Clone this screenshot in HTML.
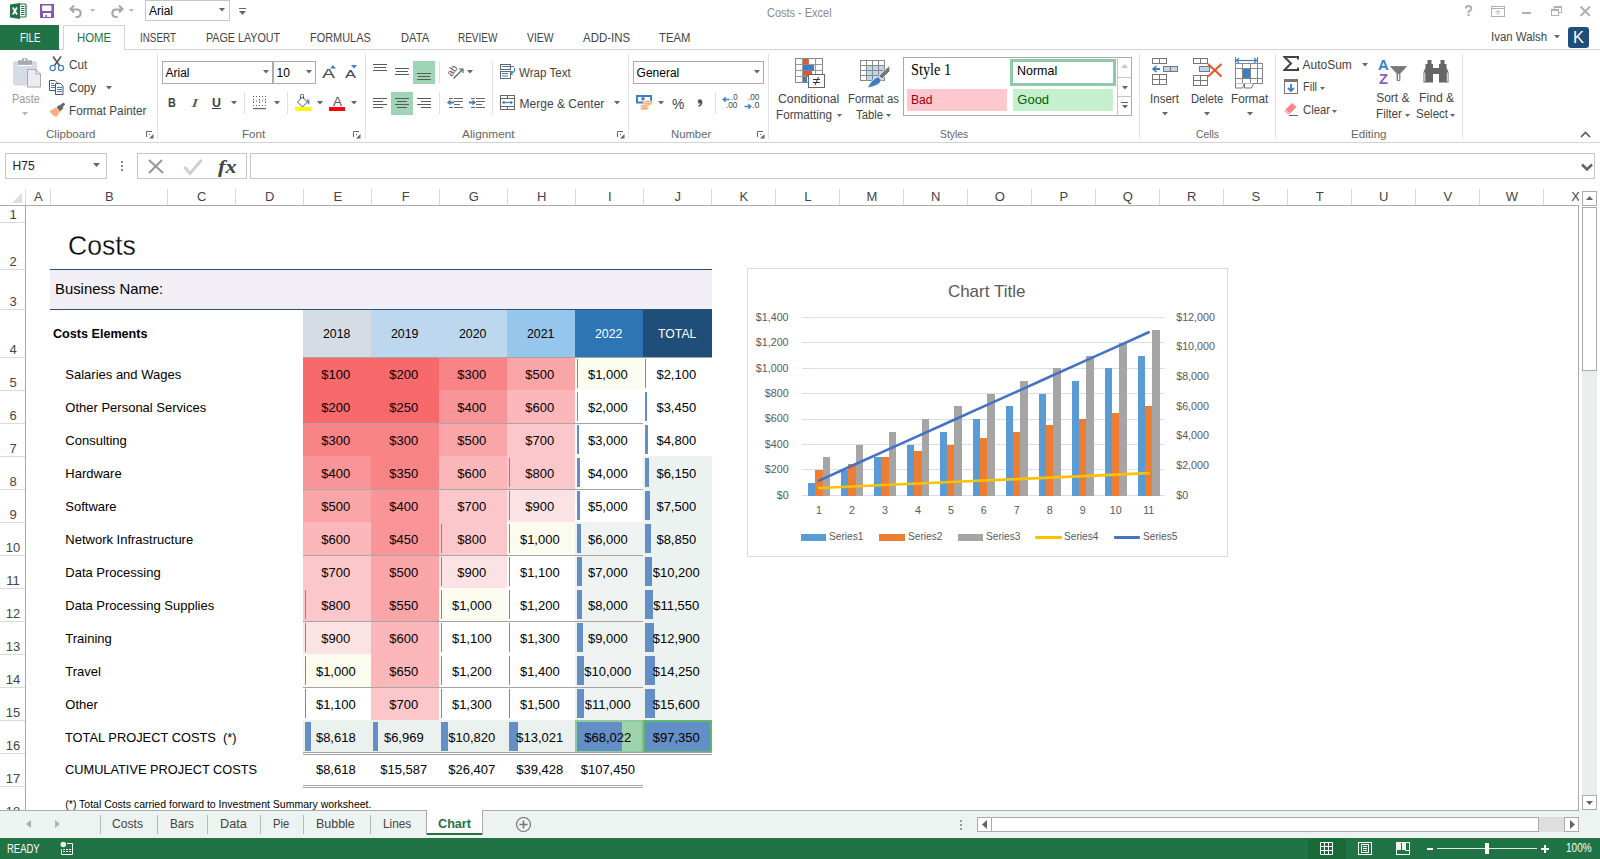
<!DOCTYPE html><html><head><meta charset="utf-8"><title>Costs - Excel</title><style>*{margin:0;padding:0;box-sizing:border-box}
html,body{width:1600px;height:859px;overflow:hidden;background:#fff;position:relative}
body>div,body>svg{position:absolute}
.t{white-space:pre;font-family:"Liberation Sans",sans-serif}
</style></head><body>
<svg style="left:10px;top:3px;" width="17" height="17" viewBox="0 0 17 17"><rect x="9.5" y="1" width="6.5" height="13" rx="1" fill="#fff" stroke="#217346" stroke-width="1.2"/><path d="M11 3.5h3.5M11 5.5h3.5M11 7.5h3.5M11 9.5h3.5M11 11.5h3.5" stroke="#217346" stroke-width="1.1"/><path d="M0 1.5 L10 0 L10 16 L0 14.5Z" fill="#217346"/><path d="M2.8 4.5 L7 11.5 M7 4.5 L2.8 11.5" stroke="#fff" stroke-width="1.7"/></svg>
<svg style="left:40px;top:4px;" width="14" height="14" viewBox="0 0 14 14"><rect x="0" y="0" width="14" height="14" fill="#8a55b0"/><rect x="2" y="1.5" width="9.5" height="5.5" rx="1" fill="#fff"/><rect x="3" y="9" width="8" height="4" fill="#fff"/><rect x="5.5" y="11" width="1.5" height="2" fill="#8a55b0"/></svg>
<svg style="left:69px;top:4px;" width="15" height="14" viewBox="0 0 15 14"><path d="M5 1.5 L1.5 5 L5 8.5 M2 5.5 H8.5 A3.8 3.8 0 0 1 8.5 13 H6.5" fill="none" stroke="#a6a6a6" stroke-width="2"/></svg>
<svg style="left:88.5px;top:7.5px;" width="7" height="5.0" viewBox="0 0 7 5.0"><path d="M1 1 L6 1 L3.5 4.0 Z" fill="#b5b5b5"/></svg>
<svg style="left:109px;top:4px;" width="15" height="14" viewBox="0 0 15 14"><path d="M10 1.5 L13.5 5 L10 8.5 M13 5.5 H6.5 A3.8 3.8 0 0 0 6.5 13 H8.5" fill="none" stroke="#a6a6a6" stroke-width="2"/></svg>
<svg style="left:127.5px;top:7.5px;" width="7" height="5.0" viewBox="0 0 7 5.0"><path d="M1 1 L6 1 L3.5 4.0 Z" fill="#b5b5b5"/></svg>
<div style="left:145px;top:0px;width:85px;height:21px;background:#fff;border:1px solid #c6c6c6;"></div>
<div class="t" style="left:149.00px;top:5.34px;font-size:12px;line-height:12px;color:#000;">Arial</div>
<svg style="left:218.0px;top:7.25px;" width="8" height="5.5" viewBox="0 0 8 5.5"><path d="M1 1 L7 1 L4.0 4.5 Z" fill="#666"/></svg>
<div style="left:239px;top:8px;width:7px;height:1px;background:#666;"></div>
<svg style="left:238.0px;top:9.5px;" width="9" height="6.0" viewBox="0 0 9 6.0"><path d="M1 1 L8 1 L4.5 5.0 Z" fill="#666"/></svg>
<div class="t" style="left:766.60px;top:5.89px;font-size:13px;line-height:13px;color:#8a8a8a;transform:scaleX(0.8436);transform-origin:0 0;">Costs - Excel</div>
<svg style="left:1464px;top:5px;" width="9" height="12" viewBox="0 0 9 12"><path d="M1.8 3.5 Q1.8 1 4.5 1 Q7.3 1 7.3 3.5 Q7.3 5.3 5.2 6 Q4.5 6.5 4.5 8" fill="none" stroke="#b0b0b0" stroke-width="2"/><rect x="3.5" y="9" width="2.2" height="2" fill="#b0b0b0"/></svg>
<svg style="left:1491px;top:6px;" width="14" height="11" viewBox="0 0 14 11"><rect x="0.5" y="0.5" width="13" height="10" fill="none" stroke="#b0b0b0"/><path d="M0.5 2.5h13" stroke="#b0b0b0"/><path d="M7 9V4.5M4.5 7 L7 4.5 L9.5 7" fill="none" stroke="#b0b0b0"/></svg>
<div style="left:1522px;top:12px;width:9px;height:2px;background:#b0b0b0;"></div>
<svg style="left:1551px;top:6px;" width="11" height="10" viewBox="0 0 11 10"><rect x="0.5" y="3.5" width="7" height="6" fill="none" stroke="#b0b0b0"/><path d="M0.5 4.5h7" stroke="#b0b0b0"/><path d="M3 3.5V0.5h7.5v6H7.5M3 1.5h7.5" fill="none" stroke="#b0b0b0"/></svg>
<svg style="left:1579px;top:5px;" width="13" height="12" viewBox="0 0 13 12"><path d="M1.5 1.5L11 11M11 1.5L1.5 11" stroke="#b0b0b0" stroke-width="2"/></svg>
<div style="left:0px;top:49px;width:63px;height:1px;background:#d4d4d4;"></div>
<div style="left:125px;top:49px;width:1475px;height:1px;background:#d4d4d4;"></div>
<div style="left:0px;top:25px;width:59px;height:25px;background:#217346;"></div>
<div class="t" style="left:19.50px;top:31.84px;font-size:12px;line-height:12px;color:#fff;transform:scaleX(0.8010);transform-origin:0 0;">FILE</div>
<div style="left:63px;top:25px;width:62px;height:25px;background:#fff;border:1px solid #d4d4d4;border-bottom:none;"></div>
<div class="t" style="left:76.80px;top:32.04px;font-size:12px;line-height:12px;color:#217346;transform:scaleX(0.9500);transform-origin:0 0;">HOME</div>
<div class="t" style="left:140.30px;top:32.04px;font-size:12px;line-height:12px;color:#444;transform:scaleX(0.8221);transform-origin:0 0;">INSERT</div>
<div class="t" style="left:206.30px;top:32.04px;font-size:12px;line-height:12px;color:#444;transform:scaleX(0.8925);transform-origin:0 0;">PAGE LAYOUT</div>
<div class="t" style="left:310.30px;top:32.04px;font-size:12px;line-height:12px;color:#444;transform:scaleX(0.9104);transform-origin:0 0;">FORMULAS</div>
<div class="t" style="left:400.70px;top:32.04px;font-size:12px;line-height:12px;color:#444;transform:scaleX(0.9297);transform-origin:0 0;">DATA</div>
<div class="t" style="left:458.20px;top:32.04px;font-size:12px;line-height:12px;color:#444;transform:scaleX(0.8302);transform-origin:0 0;">REVIEW</div>
<div class="t" style="left:527.20px;top:32.04px;font-size:12px;line-height:12px;color:#444;transform:scaleX(0.8641);transform-origin:0 0;">VIEW</div>
<div class="t" style="left:583.20px;top:32.04px;font-size:12px;line-height:12px;color:#444;transform:scaleX(0.9546);transform-origin:0 0;">ADD-INS</div>
<div class="t" style="left:659.40px;top:32.04px;font-size:12px;line-height:12px;color:#444;transform:scaleX(0.9389);transform-origin:0 0;">TEAM</div>
<div class="t" style="left:1490.50px;top:30.54px;font-size:12px;line-height:12px;color:#444;transform:scaleX(0.9540);transform-origin:0 0;">Ivan Walsh</div>
<svg style="left:1552.5px;top:33.75px;" width="8" height="5.5" viewBox="0 0 8 5.5"><path d="M1 1 L7 1 L4.0 4.5 Z" fill="#666"/></svg>
<div style="left:1568px;top:27px;width:21px;height:21px;background:#1e4e79;border-radius:3px;"></div>
<div class="t" style="left:1573.00px;top:30.45px;font-size:16px;line-height:16px;color:#fff;transform:scaleX(1.0307);transform-origin:0 0;">K</div>
<div style="left:0px;top:142px;width:1600px;height:1px;background:#d4d4d4;"></div>
<div style="left:157px;top:54px;width:1px;height:85px;background:#e1e1e1;"></div>
<div style="left:365px;top:54px;width:1px;height:85px;background:#e1e1e1;"></div>
<div style="left:628px;top:54px;width:1px;height:85px;background:#e1e1e1;"></div>
<div style="left:768px;top:54px;width:1px;height:85px;background:#e1e1e1;"></div>
<div style="left:1139px;top:54px;width:1px;height:85px;background:#e1e1e1;"></div>
<div style="left:1275px;top:54px;width:1px;height:85px;background:#e1e1e1;"></div>
<div style="left:1462px;top:54px;width:1px;height:85px;background:#e1e1e1;"></div>
<div class="t" style="left:45.90px;top:128.69px;font-size:11px;line-height:11px;color:#666;transform:scaleX(1.0492);transform-origin:0 0;">Clipboard</div>
<div class="t" style="left:241.70px;top:128.69px;font-size:11px;line-height:11px;color:#666;transform:scaleX(1.0586);transform-origin:0 0;">Font</div>
<div class="t" style="left:462.40px;top:128.69px;font-size:11px;line-height:11px;color:#666;transform:scaleX(1.0753);transform-origin:0 0;">Alignment</div>
<div class="t" style="left:670.80px;top:128.69px;font-size:11px;line-height:11px;color:#666;transform:scaleX(1.0275);transform-origin:0 0;">Number</div>
<div class="t" style="left:939.50px;top:128.69px;font-size:11px;line-height:11px;color:#666;transform:scaleX(0.9381);transform-origin:0 0;">Styles</div>
<div class="t" style="left:1195.60px;top:128.69px;font-size:11px;line-height:11px;color:#666;transform:scaleX(0.9407);transform-origin:0 0;">Cells</div>
<div class="t" style="left:1350.60px;top:128.69px;font-size:11px;line-height:11px;color:#666;transform:scaleX(1.0584);transform-origin:0 0;">Editing</div>
<svg style="left:146px;top:131px;" width="8" height="8" viewBox="0 0 8 8"><path d="M0.5 6V0.5H6" fill="none" stroke="#666"/><path d="M7.5 3 V7.5 H3z" fill="#666"/><rect x="3" y="3" width="1" height="1" fill="#666"/></svg>
<svg style="left:353px;top:131px;" width="8" height="8" viewBox="0 0 8 8"><path d="M0.5 6V0.5H6" fill="none" stroke="#666"/><path d="M7.5 3 V7.5 H3z" fill="#666"/><rect x="3" y="3" width="1" height="1" fill="#666"/></svg>
<svg style="left:617px;top:131px;" width="8" height="8" viewBox="0 0 8 8"><path d="M0.5 6V0.5H6" fill="none" stroke="#666"/><path d="M7.5 3 V7.5 H3z" fill="#666"/><rect x="3" y="3" width="1" height="1" fill="#666"/></svg>
<svg style="left:757px;top:131px;" width="8" height="8" viewBox="0 0 8 8"><path d="M0.5 6V0.5H6" fill="none" stroke="#666"/><path d="M7.5 3 V7.5 H3z" fill="#666"/><rect x="3" y="3" width="1" height="1" fill="#666"/></svg>
<svg style="left:1580px;top:131px;" width="11" height="7" viewBox="0 0 11 7"><path d="M1 6 L5.5 1.5 L10 6" fill="none" stroke="#555" stroke-width="1.6"/></svg>
<svg style="left:13px;top:58px;" width="29" height="31" viewBox="0 0 29 31"><rect x="0" y="3" width="24" height="24.5" rx="2" fill="#d5dce6"/><rect x="5" y="2.3" width="14" height="4.5" fill="#a9aaad"/><rect x="9.2" y="0.2" width="5.2" height="3" fill="#a9aaad"/><rect x="11" y="1" width="1.6" height="1.6" fill="#fff"/><path d="M5 7.5h14" stroke="#fff" stroke-width="1"/><path d="M14.5 11.5h8.5l4.5 4.5v13h-13z" fill="#eeeaf2" stroke="#a9a9a9"/><path d="M23 11.5v4.5h4.5" fill="none" stroke="#a9a9a9"/></svg>
<div class="t" style="left:11.60px;top:92.74px;font-size:12px;line-height:12px;color:#9a9a9a;transform:scaleX(0.9027);transform-origin:0 0;">Paste</div>
<svg style="left:20.5px;top:111.25px;" width="8" height="5.5" viewBox="0 0 8 5.5"><path d="M1 1 L7 1 L4.0 4.5 Z" fill="#b5b5b5"/></svg>
<svg style="left:49px;top:56px;" width="16" height="16" viewBox="0 0 16 16"><path d="M4 0.5 L10.5 9.5 M12 0.5 L5.5 9.5" stroke="#555" stroke-width="1.6"/><circle cx="3.7" cy="12" r="2.6" fill="#fff" stroke="#3b7fc4" stroke-width="1.2"/><circle cx="12" cy="12" r="2.6" fill="#fff" stroke="#3b7fc4" stroke-width="1.2"/></svg>
<div class="t" style="left:68.60px;top:58.64px;font-size:12px;line-height:12px;color:#444;transform:scaleX(0.9746);transform-origin:0 0;">Cut</div>
<svg style="left:49px;top:80px;" width="16" height="15" viewBox="0 0 16 15"><path d="M0.5 0.5h5.5l2 2v8h-7.5z" fill="#fff" stroke="#555" stroke-width="1"/><rect x="2" y="3" width="3" height="1" fill="#3b7fc4"/><rect x="2" y="5" width="4" height="1" fill="#3b7fc4"/><rect x="2" y="7" width="4" height="1" fill="#3b7fc4"/><path d="M6.5 3.5h5l2.5 2.5v8.5h-7.5z" fill="#fff" stroke="#555" stroke-width="1"/><rect x="8" y="7" width="5" height="1" fill="#3b7fc4"/><rect x="8" y="9" width="5" height="1" fill="#3b7fc4"/><rect x="8" y="11" width="5" height="1" fill="#3b7fc4"/></svg>
<div class="t" style="left:68.60px;top:81.64px;font-size:12px;line-height:12px;color:#444;transform:scaleX(0.9674);transform-origin:0 0;">Copy</div>
<svg style="left:104.5px;top:85.25px;" width="8" height="5.5" viewBox="0 0 8 5.5"><path d="M1 1 L7 1 L4.0 4.5 Z" fill="#666"/></svg>
<svg style="left:49px;top:102px;" width="17" height="16" viewBox="0 0 17 16"><path d="M11.5 3 L14.5 0.5 L16.2 2.3 L13.5 5.2z" fill="#666"/><path d="M7.5 5 L11.5 2.5 L14.5 6 L11 9.5z" fill="#666"/><path d="M0.5 9 L7 5.5 L11 9.5 L7.5 15 Q3 13.5 0.5 9z" fill="#f7b07b"/></svg>
<div class="t" style="left:68.60px;top:104.54px;font-size:12px;line-height:12px;color:#444;transform:scaleX(0.9753);transform-origin:0 0;">Format Painter</div>
<div style="left:162px;top:61px;width:111px;height:23px;background:#fff;border:1px solid #ababab;"></div>
<div class="t" style="left:165.50px;top:66.74px;font-size:12px;line-height:12px;color:#000;">Arial</div>
<svg style="left:261.5px;top:69.25px;" width="8" height="5.5" viewBox="0 0 8 5.5"><path d="M1 1 L7 1 L4.0 4.5 Z" fill="#666"/></svg>
<div style="left:273px;top:61px;width:43px;height:23px;background:#fff;border:1px solid #ababab;"></div>
<div class="t" style="left:276.60px;top:66.74px;font-size:12px;line-height:12px;color:#000;">10</div>
<svg style="left:304.5px;top:69.25px;" width="8" height="5.5" viewBox="0 0 8 5.5"><path d="M1 1 L7 1 L4.0 4.5 Z" fill="#666"/></svg>
<div class="t" style="left:322.00px;top:66.99px;font-size:13px;line-height:13px;color:#444;transform:scaleX(1.4992);transform-origin:0 0;">A</div>
<svg style="left:330px;top:65px;" width="6" height="4" viewBox="0 0 6 4"><path d="M0 3.5 L3 0 L6 3.5z" fill="#3b7fc4"/></svg>
<div class="t" style="left:345.00px;top:69.19px;font-size:11px;line-height:11px;color:#444;transform:scaleX(1.4992);transform-origin:0 0;">A</div>
<svg style="left:351px;top:65px;" width="6" height="4" viewBox="0 0 6 4"><path d="M0 0 L3 3.5 L6 0z" fill="#3b7fc4"/></svg>
<div class="t" style="left:168.40px;top:96.62px;font-size:12.5px;line-height:12.5px;color:#444;font-weight:bold;transform:scaleX(0.8640);transform-origin:0 0;">B</div>
<div class="t" style="left:190.60px;top:95.90px;font-size:13.5px;line-height:13.5px;color:#555;font-family:'Liberation Serif', serif;transform:scaleX(1.6459);transform-origin:0 0;font-style:italic;">I</div>
<div class="t" style="left:212.00px;top:96.62px;font-size:12.5px;line-height:12.5px;color:#444;font-weight:bold;transform:scaleX(0.9859);transform-origin:0 0;">U</div>
<div style="left:212px;top:108px;width:9px;height:1px;background:#444;"></div>
<svg style="left:229.6px;top:100.25px;" width="8" height="5.5" viewBox="0 0 8 5.5"><path d="M1 1 L7 1 L4.0 4.5 Z" fill="#666"/></svg>
<div style="left:244px;top:92px;width:1px;height:22px;background:#e1e1e1;"></div>
<svg style="left:253px;top:96px;" width="14" height="14" viewBox="0 0 14 14"><rect x="0" y="0" width="1" height="1" fill="#666"/><rect x="3" y="0" width="1" height="1" fill="#666"/><rect x="6" y="0" width="1" height="1" fill="#666"/><rect x="9" y="0" width="1" height="1" fill="#666"/><rect x="12" y="0" width="1" height="1" fill="#666"/><rect x="0" y="3" width="1" height="1" fill="#666"/><rect x="6" y="3" width="1" height="1" fill="#666"/><rect x="12" y="3" width="1" height="1" fill="#666"/><rect x="0" y="6" width="1" height="1" fill="#666"/><rect x="6" y="6" width="1" height="1" fill="#666"/><rect x="12" y="6" width="1" height="1" fill="#666"/><rect x="0" y="9" width="1" height="1" fill="#666"/><rect x="3" y="9" width="1" height="1" fill="#666"/><rect x="6" y="9" width="1" height="1" fill="#666"/><rect x="9" y="9" width="1" height="1" fill="#666"/><rect x="12" y="9" width="1" height="1" fill="#666"/><rect x="0" y="4.5" width="1" height="1" fill="#666"/><rect x="3" y="4.5" width="1" height="1" fill="#666"/><rect x="6" y="4.5" width="1" height="1" fill="#666"/><rect x="9" y="4.5" width="1" height="1" fill="#666"/><rect x="12" y="4.5" width="1" height="1" fill="#666"/><rect x="0" y="12" width="13" height="1.2" fill="#666"/></svg>
<svg style="left:273.0px;top:100.25px;" width="8" height="5.5" viewBox="0 0 8 5.5"><path d="M1 1 L7 1 L4.0 4.5 Z" fill="#666"/></svg>
<div style="left:287px;top:92px;width:1px;height:22px;background:#e1e1e1;"></div>
<svg style="left:295px;top:94px;" width="17" height="18" viewBox="0 0 17 18"><path d="M2.5 8 L7.5 3 L12.5 8 L7.5 13z" fill="#fff" stroke="#555" stroke-width="1"/><path d="M5.5 5 V1.5 A1.5 1.5 0 0 1 8.5 1.5 V5" fill="none" stroke="#555"/><path d="M12 5 Q15.5 6 14 11 Q12.5 9 12.5 8z" fill="#3b7fc4"/><rect x="0" y="13" width="16" height="4" fill="#ffff00"/></svg>
<svg style="left:315.5px;top:100.25px;" width="8" height="5.5" viewBox="0 0 8 5.5"><path d="M1 1 L7 1 L4.0 4.5 Z" fill="#666"/></svg>
<div class="t" style="left:333.00px;top:95.49px;font-size:13px;line-height:13px;color:#555;transform:scaleX(1.0379);transform-origin:0 0;">A</div>
<div style="left:329px;top:107px;width:16px;height:4px;background:#ff0000;"></div>
<svg style="left:349.5px;top:100.25px;" width="8" height="5.5" viewBox="0 0 8 5.5"><path d="M1 1 L7 1 L4.0 4.5 Z" fill="#666"/></svg>
<div style="left:373px;top:64px;width:14px;height:1px;background:#5a5a5a;"></div>
<div style="left:374px;top:67px;width:12px;height:1px;background:#5a5a5a;"></div>
<div style="left:373px;top:70px;width:14px;height:1px;background:#5a5a5a;"></div>
<div style="left:395px;top:68px;width:14px;height:1px;background:#5a5a5a;"></div>
<div style="left:396px;top:71px;width:12px;height:1px;background:#5a5a5a;"></div>
<div style="left:395px;top:74px;width:14px;height:1px;background:#5a5a5a;"></div>
<div style="left:413px;top:61px;width:22px;height:23px;background:#9fd5b7;"></div>
<div style="left:417px;top:73px;width:14px;height:1px;background:#5a5a5a;"></div>
<div style="left:418px;top:76px;width:12px;height:1px;background:#5a5a5a;"></div>
<div style="left:417px;top:79px;width:14px;height:1px;background:#5a5a5a;"></div>
<div style="left:439px;top:61px;width:1px;height:22px;background:#e1e1e1;"></div>
<svg style="left:446px;top:63px;" width="19" height="17" viewBox="0 0 19 17"><text x="0" y="0" font-size="10" fill="#555" font-family="Liberation Sans" transform="translate(5.5 14) rotate(-55)">ab</text><path d="M7.5 15.5 L16.5 6.5" stroke="#555" stroke-width="1.1"/><path d="M13 6 H17 V10" fill="none" stroke="#555" stroke-width="1.1"/></svg>
<svg style="left:465.5px;top:69.25px;" width="8" height="5.5" viewBox="0 0 8 5.5"><path d="M1 1 L7 1 L4.0 4.5 Z" fill="#666"/></svg>
<div style="left:492px;top:61px;width:1px;height:54px;background:#e1e1e1;"></div>
<svg style="left:500px;top:63px;" width="17" height="17" viewBox="0 0 17 17"><rect x="0.5" y="1.5" width="10" height="5" fill="#fff" stroke="#666"/><rect x="0.5" y="8.5" width="10" height="7" fill="#fff" stroke="#666"/><rect x="2" y="3" width="12" height="1" fill="#3b7fc4"/><rect x="2" y="10" width="6" height="1" fill="#3b7fc4"/><rect x="2" y="12.5" width="6" height="1" fill="#3b7fc4"/><path d="M14.5 5 Q15.5 9.5 11 10" fill="none" stroke="#3b7fc4" stroke-width="1.2"/><path d="M12.5 8 L10.5 10 L12.5 12" fill="none" stroke="#3b7fc4" stroke-width="1.2"/></svg>
<div class="t" style="left:519.30px;top:66.94px;font-size:12px;line-height:12px;color:#444;transform:scaleX(0.9649);transform-origin:0 0;">Wrap Text</div>
<div style="left:373px;top:98px;width:14px;height:1px;background:#5a5a5a;"></div>
<div style="left:373px;top:101px;width:10px;height:1px;background:#5a5a5a;"></div>
<div style="left:373px;top:104px;width:14px;height:1px;background:#5a5a5a;"></div>
<div style="left:373px;top:107px;width:10px;height:1px;background:#5a5a5a;"></div>
<div style="left:391px;top:92px;width:22px;height:23px;background:#9fd5b7;"></div>
<div style="left:395px;top:98px;width:14px;height:1px;background:#5a5a5a;"></div>
<div style="left:397px;top:101px;width:10px;height:1px;background:#5a5a5a;"></div>
<div style="left:395px;top:104px;width:14px;height:1px;background:#5a5a5a;"></div>
<div style="left:397px;top:107px;width:10px;height:1px;background:#5a5a5a;"></div>
<div style="left:417px;top:98px;width:14px;height:1px;background:#5a5a5a;"></div>
<div style="left:421px;top:101px;width:10px;height:1px;background:#5a5a5a;"></div>
<div style="left:417px;top:104px;width:14px;height:1px;background:#5a5a5a;"></div>
<div style="left:421px;top:107px;width:10px;height:1px;background:#5a5a5a;"></div>
<div style="left:439px;top:92px;width:1px;height:22px;background:#e1e1e1;"></div>
<svg style="left:447px;top:98px;" width="17" height="11" viewBox="0 0 17 11"><rect x="2" y="0" width="4" height="1" fill="#666"/><rect x="7" y="0" width="9" height="1" fill="#666"/><rect x="7" y="3" width="9" height="1" fill="#666"/><rect x="7" y="6" width="6" height="1" fill="#666"/><rect x="2" y="9" width="4" height="1" fill="#666"/><rect x="7" y="9" width="9" height="1" fill="#666"/><path d="M0 4.5 L3.5 1.5 V3.5 H7 V5.5 H3.5 V7.5z" fill="#3b7fc4"/></svg>
<svg style="left:469px;top:98px;" width="17" height="11" viewBox="0 0 17 11"><rect x="2" y="0" width="4" height="1" fill="#666"/><rect x="7" y="0" width="9" height="1" fill="#666"/><rect x="7" y="3" width="9" height="1" fill="#666"/><rect x="7" y="6" width="6" height="1" fill="#666"/><rect x="2" y="9" width="4" height="1" fill="#666"/><rect x="7" y="9" width="9" height="1" fill="#666"/><path d="M7 4.5 L3.5 1.5 V3.5 H0 V5.5 H3.5 V7.5z" fill="#3b7fc4"/></svg>
<svg style="left:500px;top:95px;" width="16" height="16" viewBox="0 0 16 16"><rect x="0.5" y="0.5" width="14" height="14" fill="#fff" stroke="#666"/><path d="M0.5 3.5h14M0.5 11.5h14M7.5 0.5v3M7.5 11.5v3" stroke="#666"/><path d="M2.5 7.5h10" stroke="#3b7fc4" stroke-width="1.2"/><path d="M4.5 5.5 L2 7.5 L4.5 9.5z M10.5 5.5 L13 7.5 L10.5 9.5z" fill="#3b7fc4"/></svg>
<div class="t" style="left:519.60px;top:97.64px;font-size:12px;line-height:12px;color:#444;">Merge &amp; Center</div>
<svg style="left:612.5px;top:100.25px;" width="8" height="5.5" viewBox="0 0 8 5.5"><path d="M1 1 L7 1 L4.0 4.5 Z" fill="#666"/></svg>
<div style="left:633px;top:61px;width:131px;height:23px;background:#fff;border:1px solid #ababab;"></div>
<div class="t" style="left:636.60px;top:66.94px;font-size:12px;line-height:12px;color:#000;">General</div>
<svg style="left:752.5px;top:69.25px;" width="8" height="5.5" viewBox="0 0 8 5.5"><path d="M1 1 L7 1 L4.0 4.5 Z" fill="#666"/></svg>
<svg style="left:636px;top:94px;" width="17" height="18" viewBox="0 0 17 18"><rect x="1" y="2" width="14" height="6.5" fill="#fff" stroke="#3b7fc4" stroke-width="2"/><circle cx="7" cy="4.8" r="1.8" fill="#3b7fc4"/><g fill="#f7a970" stroke="#fff" stroke-width="0.6"><ellipse cx="11.5" cy="7.8" rx="4.2" ry="1.6"/><ellipse cx="11.5" cy="10" rx="4.2" ry="1.6"/><ellipse cx="8.5" cy="12.2" rx="4.2" ry="1.6"/><ellipse cx="8.5" cy="14.4" rx="4.2" ry="1.6"/></g></svg>
<svg style="left:657.0px;top:100.25px;" width="8" height="5.5" viewBox="0 0 8 5.5"><path d="M1 1 L7 1 L4.0 4.5 Z" fill="#666"/></svg>
<div class="t" style="left:672.40px;top:97.15px;font-size:14px;line-height:14px;color:#444;transform:scaleX(0.9881);transform-origin:0 0;">%</div>
<svg style="left:697px;top:99px;" width="6" height="8" viewBox="0 0 6 8"><circle cx="3" cy="2.5" r="2.2" fill="#555"/><path d="M4.8 3 Q4.8 6 1.5 7.3" stroke="#555" stroke-width="1.4" fill="none"/></svg>
<div style="left:715px;top:92px;width:1px;height:22px;background:#e1e1e1;"></div>
<div class="t" style="left:730.60px;top:93.48px;font-size:9px;line-height:9px;color:#444;transform:scaleX(0.8793);transform-origin:0 0;">.0</div>
<div class="t" style="left:725.80px;top:101.38px;font-size:9px;line-height:9px;color:#444;transform:scaleX(0.9112);transform-origin:0 0;">.00</div>
<svg style="left:722px;top:96px;" width="8" height="7" viewBox="0 0 8 7"><path d="M7.5 3.5H1.5M3.8 1.2 L1.2 3.5 L3.8 5.8" stroke="#3b7fc4" fill="none" stroke-width="1.3"/></svg>
<div class="t" style="left:747.70px;top:93.48px;font-size:9px;line-height:9px;color:#444;transform:scaleX(0.9112);transform-origin:0 0;">.00</div>
<div class="t" style="left:751.60px;top:101.38px;font-size:9px;line-height:9px;color:#444;transform:scaleX(0.9859);transform-origin:0 0;">.0</div>
<svg style="left:744px;top:103px;" width="8" height="7" viewBox="0 0 8 7"><path d="M0.5 3.5H6.5M4.2 1.2 L6.8 3.5 L4.2 5.8" stroke="#3b7fc4" fill="none" stroke-width="1.3"/></svg>
<svg style="left:795px;top:58px;" width="31" height="31" viewBox="0 0 31 31"><rect x="0.5" y="0.5" width="27" height="24" fill="#fff" stroke="#888"/><path d="M0.5 6.5h27M0.5 12.5h27M0.5 18.5h27M7.5 0.5v24M13.5 0.5v24M20.5 0.5v24" stroke="#999"/><rect x="8" y="1" width="5.5" height="5.5" fill="#e05a2b"/><rect x="8" y="7" width="11" height="5.5" fill="#3b7fc4"/><rect x="8" y="13" width="9" height="5.5" fill="#e05a2b"/><rect x="8" y="19" width="4" height="5.5" fill="#3b7fc4"/><rect x="13.5" y="16.5" width="16" height="13" fill="#fff" stroke="#666"/><path d="M18 21.5h7M18 24.5h7M20 27 L23.5 19" stroke="#333" stroke-width="1"/></svg>
<div class="t" style="left:778.40px;top:92.74px;font-size:12px;line-height:12px;color:#444;transform:scaleX(1.0193);transform-origin:0 0;">Conditional</div>
<div class="t" style="left:775.80px;top:108.64px;font-size:12px;line-height:12px;color:#444;transform:scaleX(0.9764);transform-origin:0 0;">Formatting</div>
<svg style="left:835.5px;top:112.5px;" width="7" height="5.0" viewBox="0 0 7 5.0"><path d="M1 1 L6 1 L3.5 4.0 Z" fill="#666"/></svg>
<svg style="left:860px;top:60px;" width="31" height="29" viewBox="0 0 31 29"><rect x="6" y="5" width="19" height="16" fill="#bdd7ee"/><rect x="0.5" y="0.5" width="24" height="20" fill="none" stroke="#888"/><path d="M0.5 5.5h24M0.5 10.5h24M0.5 15.5h24M6.5 0.5v20M12.5 0.5v20M18.5 0.5v20" stroke="#888"/><path d="M29.5 5.5 L30 11 L22 19 L18.5 16z" fill="#777" stroke="#fff" stroke-width="0.8"/><path d="M18 16.5 L21.5 20 Q20 26 7 28 Q12 19 18 16.5z" fill="#3b7fc4" stroke="#fff" stroke-width="0.8"/></svg>
<div class="t" style="left:847.50px;top:92.74px;font-size:12px;line-height:12px;color:#444;transform:scaleX(0.9405);transform-origin:0 0;">Format as</div>
<div class="t" style="left:856.30px;top:108.64px;font-size:12px;line-height:12px;color:#444;transform:scaleX(0.9411);transform-origin:0 0;">Table</div>
<svg style="left:884.5px;top:112.5px;" width="7" height="5.0" viewBox="0 0 7 5.0"><path d="M1 1 L6 1 L3.5 4.0 Z" fill="#666"/></svg>
<div style="left:903px;top:57px;width:229px;height:59px;background:#fff;border:1px solid #ababab;"></div>
<div class="t" style="left:911.40px;top:62.40px;font-size:16px;line-height:16px;color:#000;font-family:'Liberation Serif', serif;transform:scaleX(0.8955);transform-origin:0 0;">Style 1</div>
<div style="left:1010px;top:58.5px;width:106px;height:27px;background:#fff;border:3px solid #8fcaa6;"></div>
<div class="t" style="left:1017.30px;top:64.49px;font-size:13px;line-height:13px;color:#000;transform:scaleX(0.9595);transform-origin:0 0;">Normal</div>
<div style="left:907px;top:89px;width:100px;height:22px;background:#ffc7ce;"></div>
<div class="t" style="left:911.40px;top:92.59px;font-size:13px;line-height:13px;color:#9c0006;transform:scaleX(0.9338);transform-origin:0 0;">Bad</div>
<div style="left:1013px;top:89px;width:100px;height:22px;background:#c6efce;"></div>
<div class="t" style="left:1017.30px;top:92.59px;font-size:13px;line-height:13px;color:#006100;">Good</div>
<div style="left:1117px;top:57px;width:1px;height:59px;background:#c6c6c6;"></div>
<div style="left:1117px;top:77px;width:15px;height:1px;background:#c6c6c6;"></div>
<div style="left:1117px;top:96px;width:15px;height:1px;background:#c6c6c6;"></div>
<svg style="left:1121px;top:64px;" width="7" height="4" viewBox="0 0 7 4"><path d="M0 4 L3.5 0 L7 4z" fill="#c6c6c6"/></svg>
<svg style="left:1120.5px;top:84.75px;" width="8" height="5.5" viewBox="0 0 8 5.5"><path d="M1 1 L7 1 L4.0 4.5 Z" fill="#666"/></svg>
<div style="left:1121px;top:102px;width:7px;height:1px;background:#666;"></div>
<svg style="left:1120.5px;top:103.75px;" width="8" height="5.5" viewBox="0 0 8 5.5"><path d="M1 1 L7 1 L4.0 4.5 Z" fill="#666"/></svg>
<svg style="left:1152px;top:58px;" width="27" height="28" viewBox="0 0 27 28"><g fill="none" stroke="#777"><rect x="0.5" y="0.5" width="14" height="5"/><path d="M7.5 0.5v5"/><rect x="0.5" y="16.5" width="14" height="10"/><path d="M0.5 21.5h14M7.5 16.5v10"/></g><rect x="11.5" y="8.5" width="14" height="5" fill="#bdd7ee" stroke="#777"/><path d="M18.5 8.5v5" stroke="#777"/><path d="M2 11H8" stroke="#3b7fc4" stroke-width="2"/><path d="M4.5 8 L1 11 L4.5 14" stroke="#3b7fc4" stroke-width="1.6" fill="none"/></svg>
<div class="t" style="left:1150.30px;top:92.64px;font-size:12px;line-height:12px;color:#444;transform:scaleX(0.9629);transform-origin:0 0;">Insert</div>
<svg style="left:1160.5px;top:111.25px;" width="8" height="5.5" viewBox="0 0 8 5.5"><path d="M1 1 L7 1 L4.0 4.5 Z" fill="#666"/></svg>
<svg style="left:1193px;top:58px;" width="30" height="28" viewBox="0 0 30 28"><g fill="none" stroke="#777"><rect x="0.5" y="0.5" width="14" height="5"/><path d="M7.5 0.5v5"/><rect x="0.5" y="17.5" width="14" height="10"/><path d="M0.5 22.5h14M7.5 17.5v10"/></g><rect x="6.5" y="8.5" width="10" height="5" fill="#bdd7ee" stroke="#777"/><path d="M15 6 L28.5 18.5 M28.5 6 L15 18.5" stroke="#e05a2b" stroke-width="2.2"/></svg>
<div class="t" style="left:1190.50px;top:92.64px;font-size:12px;line-height:12px;color:#444;transform:scaleX(0.9311);transform-origin:0 0;">Delete</div>
<svg style="left:1202.5px;top:111.25px;" width="8" height="5.5" viewBox="0 0 8 5.5"><path d="M1 1 L7 1 L4.0 4.5 Z" fill="#666"/></svg>
<svg style="left:1235px;top:56px;" width="29" height="33" viewBox="0 0 29 33"><path d="M1 4.5h21" stroke="#3b7fc4" stroke-width="1.2"/><path d="M4 2 L1.5 4.5 L4 7M19 2 L21.5 4.5 L19 7" stroke="#3b7fc4" fill="none" stroke-width="1.2"/><path d="M0.5 1v7M22.5 1v7" stroke="#3b7fc4"/><rect x="0.5" y="7.5" width="27" height="20" fill="#fff" stroke="#888"/><path d="M0.5 12.5h27M0.5 22.5h27M7.5 7.5v20M15.5 7.5v20M22.5 7.5v20" stroke="#888"/><rect x="8" y="13" width="7" height="9" fill="#3b7fc4"/><path d="M0.5 27.5v4.5h7l2-4.5M9.5 27.5v4.5h7l2-4.5" stroke="#777" fill="#fff"/></svg>
<div class="t" style="left:1230.60px;top:92.64px;font-size:12px;line-height:12px;color:#444;transform:scaleX(0.9788);transform-origin:0 0;">Format</div>
<svg style="left:1245.5px;top:111.25px;" width="8" height="5.5" viewBox="0 0 8 5.5"><path d="M1 1 L7 1 L4.0 4.5 Z" fill="#666"/></svg>
<svg style="left:1283px;top:56px;" width="16" height="15" viewBox="0 0 16 15"><path d="M15 3.5V1H1.5L8 7.5L1.5 14H15V11.5" fill="none" stroke="#444" stroke-width="2"/></svg>
<div class="t" style="left:1302.50px;top:58.59px;font-size:12px;line-height:12px;color:#444;">AutoSum</div>
<svg style="left:1360.5px;top:62.25px;" width="8" height="5.5" viewBox="0 0 8 5.5"><path d="M1 1 L7 1 L4.0 4.5 Z" fill="#666"/></svg>
<svg style="left:1284px;top:79px;" width="15" height="16" viewBox="0 0 15 16"><rect x="0.5" y="0.5" width="13" height="14" fill="#fff" stroke="#777"/><rect x="0.5" y="0.5" width="13" height="2.5" fill="#777"/><path d="M7 5v7M4 9 L7 12 L10 9" stroke="#3b7fc4" stroke-width="1.8" fill="none"/></svg>
<div class="t" style="left:1302.50px;top:81.24px;font-size:12px;line-height:12px;color:#444;transform:scaleX(0.9133);transform-origin:0 0;">Fill</div>
<svg style="left:1318.5px;top:85.5px;" width="7" height="5.0" viewBox="0 0 7 5.0"><path d="M1 1 L6 1 L3.5 4.0 Z" fill="#666"/></svg>
<svg style="left:1284px;top:102px;" width="15" height="15" viewBox="0 0 15 15"><path d="M8 1 L12.5 5 L6 11.5 L1.5 7.5z" fill="#f4868a"/><path d="M1.5 7.5 L6 11.5 L4.5 13 L0.5 9.5z" fill="#f7b3b5"/><path d="M5 13.5h9" stroke="#666"/></svg>
<div class="t" style="left:1302.50px;top:104.24px;font-size:12px;line-height:12px;color:#444;transform:scaleX(0.9415);transform-origin:0 0;">Clear</div>
<svg style="left:1330.5px;top:108.5px;" width="7" height="5.0" viewBox="0 0 7 5.0"><path d="M1 1 L6 1 L3.5 4.0 Z" fill="#666"/></svg>
<div class="t" style="left:1378.10px;top:58.32px;font-size:14.5px;line-height:14.5px;color:#3b7fc4;font-weight:bold;transform:scaleX(1.0218);transform-origin:0 0;">A</div>
<div class="t" style="left:1379.20px;top:72.32px;font-size:14.5px;line-height:14.5px;color:#8e5bc0;font-weight:bold;transform:scaleX(1.0161);transform-origin:0 0;">Z</div>
<svg style="left:1390px;top:65px;" width="18" height="17" viewBox="0 0 18 17"><path d="M0.5 1.5 H16.5 L10 8.5 V15.5 H7 V8.5z" fill="#777" stroke="#777" stroke-width="0.8"/><path d="M8 9v6h1.2v-6" fill="#fff"/></svg>
<div class="t" style="left:1376.20px;top:92.34px;font-size:12px;line-height:12px;color:#444;">Sort &amp;</div>
<div class="t" style="left:1376.20px;top:108.34px;font-size:12px;line-height:12px;color:#444;transform:scaleX(0.9750);transform-origin:0 0;">Filter</div>
<svg style="left:1404.0px;top:112.5px;" width="7" height="5.0" viewBox="0 0 7 5.0"><path d="M1 1 L6 1 L3.5 4.0 Z" fill="#666"/></svg>
<svg style="left:1423px;top:59px;" width="27" height="24" viewBox="0 0 27 24"><path d="M4.5 1h4v4h1.5v18.5H0.5V13L2.5 9V5h2z" fill="#666"/><path d="M17.5 1h4v4h2V9l2 4v10.5H16V5h1.5z" fill="#666"/><rect x="9" y="9" width="8" height="6" fill="#666"/><path d="M1.8 13.5v9M24.3 13.5v9" stroke="#fff" stroke-width="0.9"/></svg>
<div class="t" style="left:1418.50px;top:92.34px;font-size:12px;line-height:12px;color:#444;transform:scaleX(1.0149);transform-origin:0 0;">Find &amp;</div>
<div class="t" style="left:1416.20px;top:108.34px;font-size:12px;line-height:12px;color:#444;transform:scaleX(0.9594);transform-origin:0 0;">Select</div>
<svg style="left:1449.0px;top:112.5px;" width="7" height="5.0" viewBox="0 0 7 5.0"><path d="M1 1 L6 1 L3.5 4.0 Z" fill="#666"/></svg>
<div style="left:5px;top:153px;width:102px;height:26px;background:#fff;border:1px solid #c6c6c6;"></div>
<div class="t" style="left:12.60px;top:160.44px;font-size:12px;line-height:12px;color:#222;">H75</div>
<svg style="left:92.0px;top:162.0px;" width="9" height="6.0" viewBox="0 0 9 6.0"><path d="M1 1 L8 1 L4.5 5.0 Z" fill="#666"/></svg>
<div style="left:121px;top:161px;width:2px;height:2px;background:#888;"></div>
<div style="left:121px;top:165px;width:2px;height:2px;background:#888;"></div>
<div style="left:121px;top:169px;width:2px;height:2px;background:#888;"></div>
<div style="left:137px;top:153px;width:110px;height:26px;background:#fff;border:1px solid #c6c6c6;"></div>
<svg style="left:147px;top:158px;" width="18" height="17" viewBox="0 0 18 17"><path d="M2 2 L16 15 M15 2 L2 15" stroke="#9a9a9a" stroke-width="2.2"/></svg>
<svg style="left:183px;top:158px;" width="20" height="18" viewBox="0 0 20 18"><path d="M1.5 9 L7 15.5 L18.5 2" stroke="#cfcfcf" stroke-width="3" fill="none"/></svg>
<div class="t" style="left:218.00px;top:157.09px;font-size:19px;line-height:19px;color:#444;font-weight:bold;font-family:'Liberation Serif', serif;transform:scaleX(1.1751);transform-origin:0 0;font-style:italic;">fx</div>
<div style="left:250px;top:153px;width:1345px;height:26px;background:#fff;border:1px solid #c6c6c6;"></div>
<svg style="left:1581px;top:163px;" width="12" height="9" viewBox="0 0 12 9"><path d="M1 1.5 L6 6.5 L11 1.5" stroke="#666" stroke-width="2.6" fill="none"/></svg>
<svg style="left:12px;top:193px;" width="11" height="10" viewBox="0 0 11 10"><path d="M10 0 L10 10 L0 10z" fill="#dfdfdf"/></svg>
<div style="left:25px;top:189px;width:1px;height:16px;background:#dadada;"></div>
<div class="t" style="left:33.96px;top:190.19px;font-size:13px;line-height:13px;color:#444;">A</div>
<div style="left:50px;top:189px;width:1px;height:16px;background:#dadada;"></div>
<div class="t" style="left:104.96px;top:190.19px;font-size:13px;line-height:13px;color:#444;">B</div>
<div style="left:167px;top:189px;width:1px;height:16px;background:#dadada;"></div>
<div class="t" style="left:197.11px;top:190.19px;font-size:13px;line-height:13px;color:#444;">C</div>
<div style="left:235px;top:189px;width:1px;height:16px;background:#dadada;"></div>
<div class="t" style="left:265.11px;top:190.19px;font-size:13px;line-height:13px;color:#444;">D</div>
<div style="left:303px;top:189px;width:1px;height:16px;background:#dadada;"></div>
<div class="t" style="left:333.46px;top:190.19px;font-size:13px;line-height:13px;color:#444;">E</div>
<div style="left:371px;top:189px;width:1px;height:16px;background:#dadada;"></div>
<div class="t" style="left:401.83px;top:190.19px;font-size:13px;line-height:13px;color:#444;">F</div>
<div style="left:439px;top:189px;width:1px;height:16px;background:#dadada;"></div>
<div class="t" style="left:468.74px;top:190.19px;font-size:13px;line-height:13px;color:#444;">G</div>
<div style="left:507px;top:189px;width:1px;height:16px;background:#dadada;"></div>
<div class="t" style="left:537.11px;top:190.19px;font-size:13px;line-height:13px;color:#444;">H</div>
<div style="left:575px;top:189px;width:1px;height:16px;background:#dadada;"></div>
<div class="t" style="left:607.99px;top:190.19px;font-size:13px;line-height:13px;color:#444;">I</div>
<div style="left:643px;top:189px;width:1px;height:16px;background:#dadada;"></div>
<div class="t" style="left:674.55px;top:190.19px;font-size:13px;line-height:13px;color:#444;">J</div>
<div style="left:711px;top:189px;width:1px;height:16px;background:#dadada;"></div>
<div class="t" style="left:739.46px;top:190.19px;font-size:13px;line-height:13px;color:#444;">K</div>
<div style="left:775px;top:189px;width:1px;height:16px;background:#dadada;"></div>
<div class="t" style="left:804.18px;top:190.19px;font-size:13px;line-height:13px;color:#444;">L</div>
<div style="left:839px;top:189px;width:1px;height:16px;background:#dadada;"></div>
<div class="t" style="left:866.39px;top:190.19px;font-size:13px;line-height:13px;color:#444;">M</div>
<div style="left:903px;top:189px;width:1px;height:16px;background:#dadada;"></div>
<div class="t" style="left:931.11px;top:190.19px;font-size:13px;line-height:13px;color:#444;">N</div>
<div style="left:967px;top:189px;width:1px;height:16px;background:#dadada;"></div>
<div class="t" style="left:994.74px;top:190.19px;font-size:13px;line-height:13px;color:#444;">O</div>
<div style="left:1031px;top:189px;width:1px;height:16px;background:#dadada;"></div>
<div class="t" style="left:1059.46px;top:190.19px;font-size:13px;line-height:13px;color:#444;">P</div>
<div style="left:1095px;top:189px;width:1px;height:16px;background:#dadada;"></div>
<div class="t" style="left:1122.74px;top:190.19px;font-size:13px;line-height:13px;color:#444;">Q</div>
<div style="left:1159px;top:189px;width:1px;height:16px;background:#dadada;"></div>
<div class="t" style="left:1187.11px;top:190.19px;font-size:13px;line-height:13px;color:#444;">R</div>
<div style="left:1223px;top:189px;width:1px;height:16px;background:#dadada;"></div>
<div class="t" style="left:1251.46px;top:190.19px;font-size:13px;line-height:13px;color:#444;">S</div>
<div style="left:1287px;top:189px;width:1px;height:16px;background:#dadada;"></div>
<div class="t" style="left:1315.83px;top:190.19px;font-size:13px;line-height:13px;color:#444;">T</div>
<div style="left:1351px;top:189px;width:1px;height:16px;background:#dadada;"></div>
<div class="t" style="left:1379.11px;top:190.19px;font-size:13px;line-height:13px;color:#444;">U</div>
<div style="left:1415px;top:189px;width:1px;height:16px;background:#dadada;"></div>
<div class="t" style="left:1443.46px;top:190.19px;font-size:13px;line-height:13px;color:#444;">V</div>
<div style="left:1479px;top:189px;width:1px;height:16px;background:#dadada;"></div>
<div class="t" style="left:1505.67px;top:190.19px;font-size:13px;line-height:13px;color:#444;">W</div>
<div style="left:1543px;top:189px;width:1px;height:16px;background:#dadada;"></div>
<div class="t" style="left:1571.16px;top:190.19px;font-size:13px;line-height:13px;color:#444;">X</div>
<div style="left:0px;top:205px;width:1578px;height:1px;background:#ababab;"></div>
<div style="left:25px;top:205px;width:1px;height:605px;background:#ababab;"></div>
<div style="left:0px;top:222px;width:25px;height:1px;background:#dadada;"></div>
<div class="t" style="left:9.38px;top:207.99px;font-size:13px;line-height:13px;color:#444;">1</div>
<div style="left:0px;top:269px;width:25px;height:1px;background:#dadada;"></div>
<div class="t" style="left:9.38px;top:254.99px;font-size:13px;line-height:13px;color:#444;">2</div>
<div style="left:0px;top:309px;width:25px;height:1px;background:#dadada;"></div>
<div class="t" style="left:9.38px;top:294.99px;font-size:13px;line-height:13px;color:#444;">3</div>
<div style="left:0px;top:357px;width:25px;height:1px;background:#dadada;"></div>
<div class="t" style="left:9.38px;top:342.99px;font-size:13px;line-height:13px;color:#444;">4</div>
<div style="left:0px;top:390px;width:25px;height:1px;background:#dadada;"></div>
<div class="t" style="left:9.38px;top:375.99px;font-size:13px;line-height:13px;color:#444;">5</div>
<div style="left:0px;top:423px;width:25px;height:1px;background:#dadada;"></div>
<div class="t" style="left:9.38px;top:408.99px;font-size:13px;line-height:13px;color:#444;">6</div>
<div style="left:0px;top:456px;width:25px;height:1px;background:#dadada;"></div>
<div class="t" style="left:9.38px;top:441.99px;font-size:13px;line-height:13px;color:#444;">7</div>
<div style="left:0px;top:489px;width:25px;height:1px;background:#dadada;"></div>
<div class="t" style="left:9.38px;top:474.99px;font-size:13px;line-height:13px;color:#444;">8</div>
<div style="left:0px;top:522px;width:25px;height:1px;background:#dadada;"></div>
<div class="t" style="left:9.38px;top:507.99px;font-size:13px;line-height:13px;color:#444;">9</div>
<div style="left:0px;top:555px;width:25px;height:1px;background:#dadada;"></div>
<div class="t" style="left:5.77px;top:540.99px;font-size:13px;line-height:13px;color:#444;">10</div>
<div style="left:0px;top:588px;width:25px;height:1px;background:#dadada;"></div>
<div class="t" style="left:6.25px;top:573.99px;font-size:13px;line-height:13px;color:#444;">11</div>
<div style="left:0px;top:621px;width:25px;height:1px;background:#dadada;"></div>
<div class="t" style="left:5.77px;top:606.99px;font-size:13px;line-height:13px;color:#444;">12</div>
<div style="left:0px;top:654px;width:25px;height:1px;background:#dadada;"></div>
<div class="t" style="left:5.77px;top:639.99px;font-size:13px;line-height:13px;color:#444;">13</div>
<div style="left:0px;top:687px;width:25px;height:1px;background:#dadada;"></div>
<div class="t" style="left:5.77px;top:672.99px;font-size:13px;line-height:13px;color:#444;">14</div>
<div style="left:0px;top:720px;width:25px;height:1px;background:#dadada;"></div>
<div class="t" style="left:5.77px;top:705.99px;font-size:13px;line-height:13px;color:#444;">15</div>
<div style="left:0px;top:753px;width:25px;height:1px;background:#dadada;"></div>
<div class="t" style="left:5.77px;top:738.99px;font-size:13px;line-height:13px;color:#444;">16</div>
<div style="left:0px;top:786px;width:25px;height:1px;background:#dadada;"></div>
<div class="t" style="left:5.77px;top:771.99px;font-size:13px;line-height:13px;color:#444;">17</div>
<div class="t" style="left:5.77px;top:804.99px;font-size:13px;line-height:13px;color:#444;">18</div>
<div style="left:1578px;top:205px;width:1px;height:605px;background:#ababab;"></div>
<div class="t" style="left:67.75px;top:232.19px;font-size:28px;line-height:28px;color:#000;transform:scaleX(0.9487);transform-origin:0 0;-webkit-text-stroke:0.35px #fff;">Costs</div>
<div style="left:50px;top:269px;width:662px;height:40px;background:#f1eef6;"></div>
<div style="left:50px;top:269px;width:662px;height:1px;background:#2c4d75;"></div>
<div style="left:50px;top:309px;width:662px;height:1px;background:#2c4d75;"></div>
<div class="t" style="left:54.75px;top:282.47px;font-size:14.5px;line-height:14.5px;color:#000;transform:scaleX(1.0249);transform-origin:0 0;">Business Name:</div>
<div class="t" style="left:53.30px;top:326.79px;font-size:13px;line-height:13px;color:#000;font-weight:bold;transform:scaleX(0.9689);transform-origin:0 0;">Costs Elements</div>
<div style="left:303px;top:310px;width:68px;height:47px;background:#d6dce4;"></div>
<div class="t" style="left:322.75px;top:326.59px;font-size:13px;line-height:13px;color:#000;transform:scaleX(0.9509);transform-origin:0 0;">2018</div>
<div style="left:371px;top:310px;width:68px;height:47px;background:#bdd7ee;"></div>
<div class="t" style="left:390.75px;top:326.59px;font-size:13px;line-height:13px;color:#000;transform:scaleX(0.9509);transform-origin:0 0;">2019</div>
<div style="left:439px;top:310px;width:68px;height:47px;background:#bdd7ee;"></div>
<div class="t" style="left:458.75px;top:326.59px;font-size:13px;line-height:13px;color:#000;transform:scaleX(0.9509);transform-origin:0 0;">2020</div>
<div style="left:507px;top:310px;width:68px;height:47px;background:#97c6ec;"></div>
<div class="t" style="left:526.75px;top:326.59px;font-size:13px;line-height:13px;color:#000;transform:scaleX(0.9509);transform-origin:0 0;">2021</div>
<div style="left:575px;top:310px;width:68px;height:47px;background:#2e75b6;"></div>
<div class="t" style="left:594.75px;top:326.59px;font-size:13px;line-height:13px;color:#fff;transform:scaleX(0.9509);transform-origin:0 0;">2022</div>
<div style="left:643px;top:310px;width:69px;height:47px;background:#1f4e78;"></div>
<div class="t" style="left:657.80px;top:326.59px;font-size:13px;line-height:13px;color:#fff;transform:scaleX(0.9436);transform-origin:0 0;">TOTAL</div>
<div style="left:303px;top:357px;width:409px;height:1px;background:#a6a6a6;"></div>
<div class="t" style="left:65.30px;top:367.59px;font-size:13px;line-height:13px;color:#000;">Salaries and Wages</div>
<div style="left:303px;top:358px;width:68px;height:32px;background:#f8696b;"></div>
<div style="left:371px;top:358px;width:68px;height:32px;background:#f8696b;"></div>
<div style="left:439px;top:358px;width:68px;height:32px;background:#f98486;"></div>
<div style="left:507px;top:358px;width:68px;height:32px;background:#faa6a9;"></div>
<div style="left:575px;top:358px;width:68px;height:32px;background:#fcfbef;"></div>
<div style="left:577px;top:359px;width:1px;height:29px;background:#638ec6;"></div>
<div style="left:645px;top:359px;width:1px;height:29px;background:#638ec6;"></div>
<div class="t" style="left:321.34px;top:367.59px;font-size:13px;line-height:13px;color:#000;">$100</div>
<div class="t" style="left:389.34px;top:367.59px;font-size:13px;line-height:13px;color:#000;">$200</div>
<div class="t" style="left:457.34px;top:367.59px;font-size:13px;line-height:13px;color:#000;">$300</div>
<div class="t" style="left:525.34px;top:367.59px;font-size:13px;line-height:13px;color:#000;">$500</div>
<div class="t" style="left:587.92px;top:367.59px;font-size:13px;line-height:13px;color:#000;">$1,000</div>
<div class="t" style="left:656.42px;top:367.59px;font-size:13px;line-height:13px;color:#000;">$2,100</div>
<div class="t" style="left:65.30px;top:400.59px;font-size:13px;line-height:13px;color:#000;">Other Personal Services</div>
<div style="left:303px;top:390px;width:68px;height:33px;background:#f8696b;"></div>
<div style="left:371px;top:390px;width:68px;height:33px;background:#f8696b;"></div>
<div style="left:439px;top:390px;width:68px;height:33px;background:#f99598;"></div>
<div style="left:507px;top:390px;width:68px;height:33px;background:#fbb7ba;"></div>
<div style="left:577px;top:392px;width:1px;height:29px;background:#638ec6;"></div>
<div style="left:645px;top:392px;width:2px;height:29px;background:#638ec6;"></div>
<div class="t" style="left:321.34px;top:400.59px;font-size:13px;line-height:13px;color:#000;">$200</div>
<div class="t" style="left:389.34px;top:400.59px;font-size:13px;line-height:13px;color:#000;">$250</div>
<div class="t" style="left:457.34px;top:400.59px;font-size:13px;line-height:13px;color:#000;">$400</div>
<div class="t" style="left:525.34px;top:400.59px;font-size:13px;line-height:13px;color:#000;">$600</div>
<div class="t" style="left:587.92px;top:400.59px;font-size:13px;line-height:13px;color:#000;">$2,000</div>
<div class="t" style="left:656.42px;top:400.59px;font-size:13px;line-height:13px;color:#000;">$3,450</div>
<div class="t" style="left:65.30px;top:433.59px;font-size:13px;line-height:13px;color:#000;">Consulting</div>
<div style="left:303px;top:423px;width:68px;height:33px;background:#f98486;"></div>
<div style="left:371px;top:423px;width:68px;height:33px;background:#f98486;"></div>
<div style="left:439px;top:423px;width:68px;height:33px;background:#faa6a9;"></div>
<div style="left:507px;top:423px;width:68px;height:33px;background:#fcc7ca;"></div>
<div style="left:577px;top:425px;width:2px;height:29px;background:#638ec6;"></div>
<div style="left:645px;top:425px;width:3px;height:29px;background:#638ec6;"></div>
<div class="t" style="left:321.34px;top:433.59px;font-size:13px;line-height:13px;color:#000;">$300</div>
<div class="t" style="left:389.34px;top:433.59px;font-size:13px;line-height:13px;color:#000;">$300</div>
<div class="t" style="left:457.34px;top:433.59px;font-size:13px;line-height:13px;color:#000;">$500</div>
<div class="t" style="left:525.34px;top:433.59px;font-size:13px;line-height:13px;color:#000;">$700</div>
<div class="t" style="left:587.92px;top:433.59px;font-size:13px;line-height:13px;color:#000;">$3,000</div>
<div class="t" style="left:656.42px;top:433.59px;font-size:13px;line-height:13px;color:#000;">$4,800</div>
<div class="t" style="left:65.30px;top:466.59px;font-size:13px;line-height:13px;color:#000;">Hardware</div>
<div style="left:303px;top:456px;width:68px;height:33px;background:#f99598;"></div>
<div style="left:371px;top:456px;width:68px;height:33px;background:#f98486;"></div>
<div style="left:439px;top:456px;width:68px;height:33px;background:#fbb7ba;"></div>
<div style="left:507px;top:456px;width:68px;height:33px;background:#fcc7ca;"></div>
<div style="left:509px;top:458px;width:1px;height:29px;background:#638ec6;"></div>
<div style="left:577px;top:458px;width:3px;height:29px;background:#638ec6;"></div>
<div style="left:643px;top:456px;width:69px;height:33px;background:#ecf2f0;"></div>
<div style="left:645px;top:458px;width:4px;height:29px;background:#638ec6;"></div>
<div class="t" style="left:321.34px;top:466.59px;font-size:13px;line-height:13px;color:#000;">$400</div>
<div class="t" style="left:389.34px;top:466.59px;font-size:13px;line-height:13px;color:#000;">$350</div>
<div class="t" style="left:457.34px;top:466.59px;font-size:13px;line-height:13px;color:#000;">$600</div>
<div class="t" style="left:525.34px;top:466.59px;font-size:13px;line-height:13px;color:#000;">$800</div>
<div class="t" style="left:587.92px;top:466.59px;font-size:13px;line-height:13px;color:#000;">$4,000</div>
<div class="t" style="left:656.42px;top:466.59px;font-size:13px;line-height:13px;color:#000;">$6,150</div>
<div class="t" style="left:65.30px;top:499.59px;font-size:13px;line-height:13px;color:#000;">Software</div>
<div style="left:303px;top:489px;width:68px;height:33px;background:#faa6a9;"></div>
<div style="left:371px;top:489px;width:68px;height:33px;background:#f99598;"></div>
<div style="left:439px;top:489px;width:68px;height:33px;background:#fcc7ca;"></div>
<div style="left:507px;top:489px;width:68px;height:33px;background:#fbe3e5;"></div>
<div style="left:509px;top:491px;width:1px;height:29px;background:#638ec6;"></div>
<div style="left:577px;top:491px;width:3px;height:29px;background:#638ec6;"></div>
<div style="left:643px;top:489px;width:69px;height:33px;background:#ecf2f0;"></div>
<div style="left:645px;top:491px;width:5px;height:29px;background:#638ec6;"></div>
<div class="t" style="left:321.34px;top:499.59px;font-size:13px;line-height:13px;color:#000;">$500</div>
<div class="t" style="left:389.34px;top:499.59px;font-size:13px;line-height:13px;color:#000;">$400</div>
<div class="t" style="left:457.34px;top:499.59px;font-size:13px;line-height:13px;color:#000;">$700</div>
<div class="t" style="left:525.34px;top:499.59px;font-size:13px;line-height:13px;color:#000;">$900</div>
<div class="t" style="left:587.92px;top:499.59px;font-size:13px;line-height:13px;color:#000;">$5,000</div>
<div class="t" style="left:656.42px;top:499.59px;font-size:13px;line-height:13px;color:#000;">$7,500</div>
<div class="t" style="left:65.30px;top:532.59px;font-size:13px;line-height:13px;color:#000;">Network Infrastructure</div>
<div style="left:303px;top:522px;width:68px;height:33px;background:#fbb7ba;"></div>
<div style="left:371px;top:522px;width:68px;height:33px;background:#f99598;"></div>
<div style="left:439px;top:522px;width:68px;height:33px;background:#fcc7ca;"></div>
<div style="left:441px;top:524px;width:1px;height:29px;background:#638ec6;"></div>
<div style="left:507px;top:522px;width:68px;height:33px;background:#fcfbef;"></div>
<div style="left:509px;top:524px;width:1px;height:29px;background:#638ec6;"></div>
<div style="left:575px;top:522px;width:68px;height:33px;background:#eef3f2;"></div>
<div style="left:577px;top:524px;width:4px;height:29px;background:#638ec6;"></div>
<div style="left:643px;top:522px;width:69px;height:33px;background:#ecf2f0;"></div>
<div style="left:645px;top:524px;width:6px;height:29px;background:#638ec6;"></div>
<div class="t" style="left:321.34px;top:532.59px;font-size:13px;line-height:13px;color:#000;">$600</div>
<div class="t" style="left:389.34px;top:532.59px;font-size:13px;line-height:13px;color:#000;">$450</div>
<div class="t" style="left:457.34px;top:532.59px;font-size:13px;line-height:13px;color:#000;">$800</div>
<div class="t" style="left:519.92px;top:532.59px;font-size:13px;line-height:13px;color:#000;">$1,000</div>
<div class="t" style="left:587.92px;top:532.59px;font-size:13px;line-height:13px;color:#000;">$6,000</div>
<div class="t" style="left:656.42px;top:532.59px;font-size:13px;line-height:13px;color:#000;">$8,850</div>
<div class="t" style="left:65.30px;top:565.59px;font-size:13px;line-height:13px;color:#000;">Data Processing</div>
<div style="left:303px;top:555px;width:68px;height:33px;background:#fcc7ca;"></div>
<div style="left:371px;top:555px;width:68px;height:33px;background:#faa6a9;"></div>
<div style="left:439px;top:555px;width:68px;height:33px;background:#fbe3e5;"></div>
<div style="left:441px;top:557px;width:1px;height:29px;background:#638ec6;"></div>
<div style="left:507px;top:555px;width:68px;height:33px;background:#ffffff;"></div>
<div style="left:509px;top:557px;width:1px;height:29px;background:#638ec6;"></div>
<div style="left:575px;top:555px;width:68px;height:33px;background:#eef3f2;"></div>
<div style="left:577px;top:557px;width:5px;height:29px;background:#638ec6;"></div>
<div style="left:643px;top:555px;width:69px;height:33px;background:#ecf2f0;"></div>
<div style="left:645px;top:557px;width:7px;height:29px;background:#638ec6;"></div>
<div class="t" style="left:321.34px;top:565.59px;font-size:13px;line-height:13px;color:#000;">$700</div>
<div class="t" style="left:389.34px;top:565.59px;font-size:13px;line-height:13px;color:#000;">$500</div>
<div class="t" style="left:457.34px;top:565.59px;font-size:13px;line-height:13px;color:#000;">$900</div>
<div class="t" style="left:519.92px;top:565.59px;font-size:13px;line-height:13px;color:#000;">$1,100</div>
<div class="t" style="left:587.92px;top:565.59px;font-size:13px;line-height:13px;color:#000;">$7,000</div>
<div class="t" style="left:652.80px;top:565.59px;font-size:13px;line-height:13px;color:#000;">$10,200</div>
<div class="t" style="left:65.30px;top:598.59px;font-size:13px;line-height:13px;color:#000;">Data Processing Supplies</div>
<div style="left:303px;top:588px;width:68px;height:33px;background:#fcc7ca;"></div>
<div style="left:305px;top:590px;width:1px;height:29px;background:#638ec6;"></div>
<div style="left:371px;top:588px;width:68px;height:33px;background:#faa6a9;"></div>
<div style="left:439px;top:588px;width:68px;height:33px;background:#fcfbef;"></div>
<div style="left:441px;top:590px;width:1px;height:29px;background:#638ec6;"></div>
<div style="left:507px;top:588px;width:68px;height:33px;background:#ffffff;"></div>
<div style="left:509px;top:590px;width:1px;height:29px;background:#638ec6;"></div>
<div style="left:575px;top:588px;width:68px;height:33px;background:#eef3f2;"></div>
<div style="left:577px;top:590px;width:5px;height:29px;background:#638ec6;"></div>
<div style="left:643px;top:588px;width:69px;height:33px;background:#ecf2f0;"></div>
<div style="left:645px;top:590px;width:8px;height:29px;background:#638ec6;"></div>
<div class="t" style="left:321.34px;top:598.59px;font-size:13px;line-height:13px;color:#000;">$800</div>
<div class="t" style="left:389.34px;top:598.59px;font-size:13px;line-height:13px;color:#000;">$550</div>
<div class="t" style="left:451.92px;top:598.59px;font-size:13px;line-height:13px;color:#000;">$1,000</div>
<div class="t" style="left:519.92px;top:598.59px;font-size:13px;line-height:13px;color:#000;">$1,200</div>
<div class="t" style="left:587.92px;top:598.59px;font-size:13px;line-height:13px;color:#000;">$8,000</div>
<div class="t" style="left:653.29px;top:598.59px;font-size:13px;line-height:13px;color:#000;">$11,550</div>
<div class="t" style="left:65.30px;top:631.59px;font-size:13px;line-height:13px;color:#000;">Training</div>
<div style="left:303px;top:621px;width:68px;height:33px;background:#fbe3e5;"></div>
<div style="left:305px;top:623px;width:1px;height:29px;background:#638ec6;"></div>
<div style="left:371px;top:621px;width:68px;height:33px;background:#fbb7ba;"></div>
<div style="left:439px;top:621px;width:68px;height:33px;background:#ffffff;"></div>
<div style="left:441px;top:623px;width:1px;height:29px;background:#638ec6;"></div>
<div style="left:507px;top:621px;width:68px;height:33px;background:#ffffff;"></div>
<div style="left:509px;top:623px;width:1px;height:29px;background:#638ec6;"></div>
<div style="left:575px;top:621px;width:68px;height:33px;background:#eef3f2;"></div>
<div style="left:577px;top:623px;width:6px;height:29px;background:#638ec6;"></div>
<div style="left:643px;top:621px;width:69px;height:33px;background:#ecf2f0;"></div>
<div style="left:645px;top:623px;width:9px;height:29px;background:#638ec6;"></div>
<div class="t" style="left:321.34px;top:631.59px;font-size:13px;line-height:13px;color:#000;">$900</div>
<div class="t" style="left:389.34px;top:631.59px;font-size:13px;line-height:13px;color:#000;">$600</div>
<div class="t" style="left:451.92px;top:631.59px;font-size:13px;line-height:13px;color:#000;">$1,100</div>
<div class="t" style="left:519.92px;top:631.59px;font-size:13px;line-height:13px;color:#000;">$1,300</div>
<div class="t" style="left:587.92px;top:631.59px;font-size:13px;line-height:13px;color:#000;">$9,000</div>
<div class="t" style="left:652.80px;top:631.59px;font-size:13px;line-height:13px;color:#000;">$12,900</div>
<div class="t" style="left:65.30px;top:664.59px;font-size:13px;line-height:13px;color:#000;">Travel</div>
<div style="left:303px;top:654px;width:68px;height:33px;background:#fcfbef;"></div>
<div style="left:305px;top:656px;width:1px;height:29px;background:#638ec6;"></div>
<div style="left:371px;top:654px;width:68px;height:33px;background:#fbb7ba;"></div>
<div style="left:439px;top:654px;width:68px;height:33px;background:#ffffff;"></div>
<div style="left:441px;top:656px;width:1px;height:29px;background:#638ec6;"></div>
<div style="left:507px;top:654px;width:68px;height:33px;background:#ffffff;"></div>
<div style="left:509px;top:656px;width:1px;height:29px;background:#638ec6;"></div>
<div style="left:575px;top:654px;width:68px;height:33px;background:#eef3f2;"></div>
<div style="left:577px;top:656px;width:7px;height:29px;background:#638ec6;"></div>
<div style="left:643px;top:654px;width:69px;height:33px;background:#ecf2f0;"></div>
<div style="left:645px;top:656px;width:10px;height:29px;background:#638ec6;"></div>
<div class="t" style="left:315.92px;top:664.59px;font-size:13px;line-height:13px;color:#000;">$1,000</div>
<div class="t" style="left:389.34px;top:664.59px;font-size:13px;line-height:13px;color:#000;">$650</div>
<div class="t" style="left:451.92px;top:664.59px;font-size:13px;line-height:13px;color:#000;">$1,200</div>
<div class="t" style="left:519.92px;top:664.59px;font-size:13px;line-height:13px;color:#000;">$1,400</div>
<div class="t" style="left:584.30px;top:664.59px;font-size:13px;line-height:13px;color:#000;">$10,000</div>
<div class="t" style="left:652.80px;top:664.59px;font-size:13px;line-height:13px;color:#000;">$14,250</div>
<div class="t" style="left:65.30px;top:697.59px;font-size:13px;line-height:13px;color:#000;">Other</div>
<div style="left:303px;top:687px;width:68px;height:33px;background:#ffffff;"></div>
<div style="left:305px;top:689px;width:1px;height:29px;background:#638ec6;"></div>
<div style="left:371px;top:687px;width:68px;height:33px;background:#fcc7ca;"></div>
<div style="left:439px;top:687px;width:68px;height:33px;background:#ffffff;"></div>
<div style="left:441px;top:689px;width:1px;height:29px;background:#638ec6;"></div>
<div style="left:507px;top:687px;width:68px;height:33px;background:#ffffff;"></div>
<div style="left:509px;top:689px;width:1px;height:29px;background:#638ec6;"></div>
<div style="left:575px;top:687px;width:68px;height:33px;background:#eef3f2;"></div>
<div style="left:577px;top:689px;width:7px;height:29px;background:#638ec6;"></div>
<div style="left:643px;top:687px;width:69px;height:33px;background:#ecf2f0;"></div>
<div style="left:645px;top:689px;width:10px;height:29px;background:#638ec6;"></div>
<div class="t" style="left:315.92px;top:697.59px;font-size:13px;line-height:13px;color:#000;">$1,100</div>
<div class="t" style="left:389.34px;top:697.59px;font-size:13px;line-height:13px;color:#000;">$700</div>
<div class="t" style="left:451.92px;top:697.59px;font-size:13px;line-height:13px;color:#000;">$1,300</div>
<div class="t" style="left:519.92px;top:697.59px;font-size:13px;line-height:13px;color:#000;">$1,500</div>
<div class="t" style="left:584.79px;top:697.59px;font-size:13px;line-height:13px;color:#000;">$11,000</div>
<div class="t" style="left:652.80px;top:697.59px;font-size:13px;line-height:13px;color:#000;">$15,600</div>
<div style="left:303px;top:423px;width:340px;height:1px;background:#a6a6a6;"></div>
<div style="left:303px;top:489px;width:340px;height:1px;background:#a6a6a6;"></div>
<div style="left:303px;top:555px;width:340px;height:1px;background:#a6a6a6;"></div>
<div style="left:303px;top:621px;width:340px;height:1px;background:#a6a6a6;"></div>
<div style="left:303px;top:687px;width:340px;height:1px;background:#a6a6a6;"></div>
<div class="t" style="left:65.30px;top:730.69px;font-size:13px;line-height:13px;color:#000;transform:scaleX(0.9885);transform-origin:0 0;">TOTAL PROJECT COSTS  (*)</div>
<div style="left:303px;top:720px;width:409px;height:33px;background:#ebf1ef;"></div>
<div style="left:305px;top:722px;width:6px;height:29px;background:#638ec6;"></div>
<div style="left:373px;top:722px;width:5px;height:29px;background:#638ec6;"></div>
<div style="left:441px;top:722px;width:7px;height:29px;background:#638ec6;"></div>
<div style="left:509px;top:722px;width:9px;height:29px;background:#638ec6;"></div>
<div style="left:575px;top:720px;width:68px;height:33px;background:#9fd3ab;"></div>
<div style="left:575px;top:720px;width:68px;height:33px;border:2px solid #8fcb9c;"></div>
<div style="left:577px;top:722px;width:45px;height:29px;background:#638ec6;"></div>
<div style="left:643px;top:720px;width:69px;height:33px;background:#638ec6;border:2px solid #5fb870;"></div>
<div class="t" style="left:315.92px;top:730.69px;font-size:13px;line-height:13px;color:#000;">$8,618</div>
<div class="t" style="left:383.92px;top:730.69px;font-size:13px;line-height:13px;color:#000;">$6,969</div>
<div class="t" style="left:448.30px;top:730.69px;font-size:13px;line-height:13px;color:#000;">$10,820</div>
<div class="t" style="left:516.30px;top:730.69px;font-size:13px;line-height:13px;color:#000;">$13,021</div>
<div class="t" style="left:584.30px;top:730.69px;font-size:13px;line-height:13px;color:#000;">$68,022</div>
<div class="t" style="left:652.80px;top:730.69px;font-size:13px;line-height:13px;color:#000;">$97,350</div>
<div style="left:303px;top:752px;width:409px;height:1px;background:#a6a6a6;"></div>
<div style="left:303px;top:754px;width:409px;height:1px;background:#a6a6a6;"></div>
<div class="t" style="left:65.30px;top:763.49px;font-size:13px;line-height:13px;color:#000;transform:scaleX(0.9838);transform-origin:0 0;">CUMULATIVE PROJECT COSTS</div>
<div class="t" style="left:315.92px;top:763.49px;font-size:13px;line-height:13px;color:#000;">$8,618</div>
<div class="t" style="left:380.30px;top:763.49px;font-size:13px;line-height:13px;color:#000;">$15,587</div>
<div class="t" style="left:448.30px;top:763.49px;font-size:13px;line-height:13px;color:#000;">$26,407</div>
<div class="t" style="left:516.30px;top:763.49px;font-size:13px;line-height:13px;color:#000;">$39,428</div>
<div class="t" style="left:580.69px;top:763.49px;font-size:13px;line-height:13px;color:#000;">$107,450</div>
<div style="left:303px;top:785px;width:340px;height:1px;background:#a6a6a6;"></div>
<div style="left:303px;top:787px;width:340px;height:1px;background:#a6a6a6;"></div>
<div class="t" style="left:65.30px;top:799.21px;font-size:10.5px;line-height:10.5px;color:#000;">(*) Total Costs carried forward to Investment Summary worksheet.</div>
<div style="left:747px;top:268px;width:481px;height:289px;background:#fff;border:1px solid #d9dbe3;"></div>
<div class="t" style="left:947.90px;top:282.51px;font-size:17px;line-height:17px;color:#595959;">Chart Title</div>
<svg style="left:0px;top:0px;pointer-events:none;" width="1600" height="859" viewBox="0 0 1600 859"><path d="M802 495.5H1165" stroke="#d9dde8" stroke-width="1"/><path d="M802 469.5H1165" stroke="#d9dde8" stroke-width="1"/><path d="M802 444.5H1165" stroke="#d9dde8" stroke-width="1"/><path d="M802 419.5H1165" stroke="#d9dde8" stroke-width="1"/><path d="M802 393.5H1165" stroke="#d9dde8" stroke-width="1"/><path d="M802 368.5H1165" stroke="#d9dde8" stroke-width="1"/><path d="M802 342.5H1165" stroke="#d9dde8" stroke-width="1"/><path d="M802 317.5H1165" stroke="#d9dde8" stroke-width="1"/><rect x="808" y="483" width="7" height="13" fill="#5b9bd5" shape-rendering="crispEdges"/><rect x="815" y="470" width="8" height="26" fill="#ed7d31" shape-rendering="crispEdges"/><rect x="823" y="457" width="7" height="39" fill="#a5a5a5" shape-rendering="crispEdges"/><rect x="841" y="470" width="7" height="26" fill="#5b9bd5" shape-rendering="crispEdges"/><rect x="848" y="464" width="8" height="32" fill="#ed7d31" shape-rendering="crispEdges"/><rect x="856" y="445" width="7" height="51" fill="#a5a5a5" shape-rendering="crispEdges"/><rect x="874" y="457" width="7" height="39" fill="#5b9bd5" shape-rendering="crispEdges"/><rect x="881" y="457" width="8" height="39" fill="#ed7d31" shape-rendering="crispEdges"/><rect x="889" y="432" width="7" height="64" fill="#a5a5a5" shape-rendering="crispEdges"/><rect x="907" y="445" width="7" height="51" fill="#5b9bd5" shape-rendering="crispEdges"/><rect x="914" y="451" width="8" height="45" fill="#ed7d31" shape-rendering="crispEdges"/><rect x="922" y="419" width="7" height="77" fill="#a5a5a5" shape-rendering="crispEdges"/><rect x="940" y="432" width="7" height="64" fill="#5b9bd5" shape-rendering="crispEdges"/><rect x="947" y="445" width="7" height="51" fill="#ed7d31" shape-rendering="crispEdges"/><rect x="954" y="406" width="8" height="90" fill="#a5a5a5" shape-rendering="crispEdges"/><rect x="973" y="419" width="7" height="77" fill="#5b9bd5" shape-rendering="crispEdges"/><rect x="980" y="438" width="7" height="58" fill="#ed7d31" shape-rendering="crispEdges"/><rect x="987" y="394" width="8" height="102" fill="#a5a5a5" shape-rendering="crispEdges"/><rect x="1006" y="406" width="7" height="90" fill="#5b9bd5" shape-rendering="crispEdges"/><rect x="1013" y="432" width="7" height="64" fill="#ed7d31" shape-rendering="crispEdges"/><rect x="1020" y="381" width="8" height="115" fill="#a5a5a5" shape-rendering="crispEdges"/><rect x="1039" y="394" width="7" height="102" fill="#5b9bd5" shape-rendering="crispEdges"/><rect x="1046" y="425" width="7" height="71" fill="#ed7d31" shape-rendering="crispEdges"/><rect x="1053" y="368" width="8" height="128" fill="#a5a5a5" shape-rendering="crispEdges"/><rect x="1072" y="381" width="7" height="115" fill="#5b9bd5" shape-rendering="crispEdges"/><rect x="1079" y="419" width="7" height="77" fill="#ed7d31" shape-rendering="crispEdges"/><rect x="1086" y="356" width="8" height="140" fill="#a5a5a5" shape-rendering="crispEdges"/><rect x="1105" y="368" width="7" height="128" fill="#5b9bd5" shape-rendering="crispEdges"/><rect x="1112" y="413" width="7" height="83" fill="#ed7d31" shape-rendering="crispEdges"/><rect x="1119" y="343" width="8" height="153" fill="#a5a5a5" shape-rendering="crispEdges"/><rect x="1138" y="356" width="7" height="140" fill="#5b9bd5" shape-rendering="crispEdges"/><rect x="1145" y="406" width="7" height="90" fill="#ed7d31" shape-rendering="crispEdges"/><rect x="1152" y="330" width="8" height="166" fill="#a5a5a5" shape-rendering="crispEdges"/><polyline points="818.99,487.98 851.96,486.50 884.93,485.02 917.90,483.53 950.88,482.05 983.85,480.57 1016.82,479.08 1049.80,477.60 1082.77,476.12 1115.74,474.63 1148.71,473.15" fill="none" stroke="#ffc000" stroke-width="2.6" stroke-linecap="round"/><polyline points="818.99,480.57 851.96,465.73 884.93,450.90 917.90,436.07 950.88,421.23 983.85,406.40 1016.82,391.57 1049.80,376.73 1082.77,361.90 1115.74,347.07 1148.71,332.23" fill="none" stroke="#4472c4" stroke-width="2.6" stroke-linecap="round"/></svg>
<div class="t" style="left:776.70px;top:489.74px;font-size:10.7px;line-height:10.7px;color:#595959;">$0</div>
<div class="t" style="left:764.80px;top:464.31px;font-size:10.7px;line-height:10.7px;color:#595959;">$200</div>
<div class="t" style="left:764.80px;top:438.88px;font-size:10.7px;line-height:10.7px;color:#595959;">$400</div>
<div class="t" style="left:764.80px;top:413.45px;font-size:10.7px;line-height:10.7px;color:#595959;">$600</div>
<div class="t" style="left:764.80px;top:388.02px;font-size:10.7px;line-height:10.7px;color:#595959;">$800</div>
<div class="t" style="left:755.87px;top:362.59px;font-size:10.7px;line-height:10.7px;color:#595959;">$1,000</div>
<div class="t" style="left:755.87px;top:337.16px;font-size:10.7px;line-height:10.7px;color:#595959;">$1,200</div>
<div class="t" style="left:755.87px;top:311.73px;font-size:10.7px;line-height:10.7px;color:#595959;">$1,400</div>
<div class="t" style="left:1176.20px;top:489.74px;font-size:10.7px;line-height:10.7px;color:#595959;">$0</div>
<div class="t" style="left:1176.20px;top:460.07px;font-size:10.7px;line-height:10.7px;color:#595959;">$2,000</div>
<div class="t" style="left:1176.20px;top:430.41px;font-size:10.7px;line-height:10.7px;color:#595959;">$4,000</div>
<div class="t" style="left:1176.20px;top:400.74px;font-size:10.7px;line-height:10.7px;color:#595959;">$6,000</div>
<div class="t" style="left:1176.20px;top:371.07px;font-size:10.7px;line-height:10.7px;color:#595959;">$8,000</div>
<div class="t" style="left:1176.20px;top:341.41px;font-size:10.7px;line-height:10.7px;color:#595959;">$10,000</div>
<div class="t" style="left:1176.20px;top:311.74px;font-size:10.7px;line-height:10.7px;color:#595959;">$12,000</div>
<div class="t" style="left:816.01px;top:504.64px;font-size:10.7px;line-height:10.7px;color:#595959;">1</div>
<div class="t" style="left:848.98px;top:504.64px;font-size:10.7px;line-height:10.7px;color:#595959;">2</div>
<div class="t" style="left:881.96px;top:504.64px;font-size:10.7px;line-height:10.7px;color:#595959;">3</div>
<div class="t" style="left:914.93px;top:504.64px;font-size:10.7px;line-height:10.7px;color:#595959;">4</div>
<div class="t" style="left:947.90px;top:504.64px;font-size:10.7px;line-height:10.7px;color:#595959;">5</div>
<div class="t" style="left:980.87px;top:504.64px;font-size:10.7px;line-height:10.7px;color:#595959;">6</div>
<div class="t" style="left:1013.85px;top:504.64px;font-size:10.7px;line-height:10.7px;color:#595959;">7</div>
<div class="t" style="left:1046.82px;top:504.64px;font-size:10.7px;line-height:10.7px;color:#595959;">8</div>
<div class="t" style="left:1079.79px;top:504.64px;font-size:10.7px;line-height:10.7px;color:#595959;">9</div>
<div class="t" style="left:1109.79px;top:504.64px;font-size:10.7px;line-height:10.7px;color:#595959;">10</div>
<div class="t" style="left:1143.16px;top:504.64px;font-size:10.7px;line-height:10.7px;color:#595959;">11</div>
<div style="left:801px;top:534px;width:25px;height:7px;background:#5b9bd5;"></div>
<div class="t" style="left:828.75px;top:530.84px;font-size:10.7px;line-height:10.7px;color:#595959;transform:scaleX(0.9509);transform-origin:0 0;">Series1</div>
<div style="left:879px;top:534px;width:25.5px;height:7px;background:#ed7d31;"></div>
<div class="t" style="left:907.50px;top:530.84px;font-size:10.7px;line-height:10.7px;color:#595959;transform:scaleX(0.9509);transform-origin:0 0;">Series2</div>
<div style="left:958px;top:534px;width:24.5px;height:7px;background:#a5a5a5;"></div>
<div class="t" style="left:985.75px;top:530.84px;font-size:10.7px;line-height:10.7px;color:#595959;transform:scaleX(0.9509);transform-origin:0 0;">Series3</div>
<div style="left:1034.5px;top:536.2px;width:27.5px;height:2.6px;background:#ffc000;border-radius:1px;"></div>
<div class="t" style="left:1064.25px;top:530.84px;font-size:10.7px;line-height:10.7px;color:#595959;transform:scaleX(0.9509);transform-origin:0 0;">Series4</div>
<div style="left:1113.75px;top:536.2px;width:26.5px;height:2.6px;background:#4472c4;border-radius:1px;"></div>
<div class="t" style="left:1142.50px;top:530.84px;font-size:10.7px;line-height:10.7px;color:#595959;transform:scaleX(0.9509);transform-origin:0 0;">Series5</div>
<div style="left:1579px;top:189px;width:21px;height:621px;background:#fff;"></div>
<div style="left:1582px;top:191px;width:15px;height:15px;background:#fff;border:1px solid #ababab;"></div>
<svg style="left:1586px;top:196px;" width="7" height="4" viewBox="0 0 7 4"><path d="M0 4 L3.5 0 L7 4z" fill="#666"/></svg>
<div style="left:1582px;top:207px;width:15px;height:164px;background:#fff;border:1px solid #ababab;"></div>
<div style="left:1582px;top:371px;width:15px;height:424px;background:#e9eeec;"></div>
<div style="left:1582px;top:795px;width:15px;height:15px;background:#fff;border:1px solid #ababab;"></div>
<svg style="left:1585.0px;top:799.5px;" width="9" height="6.0" viewBox="0 0 9 6.0"><path d="M1 1 L8 1 L4.5 5.0 Z" fill="#666"/></svg>
<div style="left:0px;top:810px;width:1600px;height:28px;background:#edf3f1;"></div>
<div style="left:0px;top:810px;width:1579px;height:1px;background:#ababab;"></div>
<svg style="left:26px;top:820px;" width="6" height="8" viewBox="0 0 6 8"><path d="M5 0 L0 4 L5 8z" fill="#b0b0b0"/></svg>
<svg style="left:55px;top:820px;" width="6" height="8" viewBox="0 0 6 8"><path d="M0 0 L5 4 L0 8z" fill="#b0b0b0"/></svg>
<div style="left:100px;top:815px;width:1px;height:19px;background:#b9b9b9;"></div>
<div style="left:157px;top:815px;width:1px;height:19px;background:#b9b9b9;"></div>
<div style="left:207px;top:815px;width:1px;height:19px;background:#b9b9b9;"></div>
<div style="left:260px;top:815px;width:1px;height:19px;background:#b9b9b9;"></div>
<div style="left:303px;top:815px;width:1px;height:19px;background:#b9b9b9;"></div>
<div style="left:370px;top:815px;width:1px;height:19px;background:#b9b9b9;"></div>
<div class="t" style="left:112.40px;top:816.99px;font-size:13px;line-height:13px;color:#444;transform:scaleX(0.9329);transform-origin:0 0;">Costs</div>
<div class="t" style="left:169.50px;top:816.99px;font-size:13px;line-height:13px;color:#444;transform:scaleX(0.8941);transform-origin:0 0;">Bars</div>
<div class="t" style="left:220.00px;top:816.99px;font-size:13px;line-height:13px;color:#444;transform:scaleX(0.9796);transform-origin:0 0;">Data</div>
<div class="t" style="left:272.70px;top:816.99px;font-size:13px;line-height:13px;color:#444;transform:scaleX(0.8675);transform-origin:0 0;">Pie</div>
<div class="t" style="left:316.30px;top:816.99px;font-size:13px;line-height:13px;color:#444;transform:scaleX(0.9585);transform-origin:0 0;">Bubble</div>
<div class="t" style="left:383.20px;top:816.99px;font-size:13px;line-height:13px;color:#444;transform:scaleX(0.9074);transform-origin:0 0;">Lines</div>
<div style="left:426px;top:810px;width:57px;height:25px;background:#fff;border:1px solid #ababab;border-top:none;"></div>
<div style="left:427px;top:833px;width:55px;height:2px;background:#217346;"></div>
<div class="t" style="left:438.00px;top:816.99px;font-size:13px;line-height:13px;color:#217346;font-weight:bold;transform:scaleX(0.9721);transform-origin:0 0;">Chart</div>
<svg style="left:515px;top:817px;" width="18" height="16" viewBox="0 0 18 16"><circle cx="8.5" cy="7.5" r="7" fill="none" stroke="#777" stroke-width="1.2"/><path d="M8.5 3.5v8M4.5 7.5h8" stroke="#777" stroke-width="1.6"/></svg>
<div style="left:960px;top:820px;width:2px;height:2px;background:#999;"></div>
<div style="left:960px;top:824px;width:2px;height:2px;background:#999;"></div>
<div style="left:960px;top:828px;width:2px;height:2px;background:#999;"></div>
<div style="left:977px;top:817px;width:15px;height:15px;background:#fff;border:1px solid #ababab;"></div>
<svg style="left:982px;top:820px;" width="5" height="9" viewBox="0 0 5 9"><path d="M5 0 L0 4.5 L5 9z" fill="#666"/></svg>
<div style="left:991px;top:817px;width:548px;height:15px;background:#fff;border:1px solid #ababab;"></div>
<div style="left:1539px;top:817px;width:25px;height:15px;background:#dedede;"></div>
<div style="left:1564px;top:817px;width:15px;height:15px;background:#fff;border:1px solid #ababab;"></div>
<svg style="left:1570px;top:820px;" width="5" height="9" viewBox="0 0 5 9"><path d="M0 0 L5 4.5 L0 9z" fill="#666"/></svg>
<div style="left:0px;top:838px;width:1600px;height:21px;background:#217346;"></div>
<div class="t" style="left:7.30px;top:842.54px;font-size:12px;line-height:12px;color:#fff;transform:scaleX(0.7909);transform-origin:0 0;">READY</div>
<svg style="left:60px;top:841px;" width="15" height="15" viewBox="0 0 15 15"><circle cx="3.3" cy="3.5" r="2.8" fill="#e6eeea"/><path d="M7 2.5 H12.5 V13.5 H1.5 V8" fill="none" stroke="#fff"/><rect x="3" y="8" width="2" height="1" fill="#fff"/><rect x="6" y="8" width="2" height="1" fill="#fff"/><rect x="9" y="8" width="2" height="1" fill="#fff"/><rect x="3" y="10" width="2" height="1" fill="#fff"/><rect x="6" y="10" width="2" height="1" fill="#fff"/><rect x="9" y="10" width="2" height="1" fill="#fff"/></svg>
<div style="left:1308px;top:839px;width:38px;height:20px;background:#176a38;"></div>
<svg style="left:1320px;top:842px;" width="13" height="13" viewBox="0 0 13 13"><path d="M0.5 0.5h12v12h-12z M0.5 4.5h12M0.5 8.5h12M4.5 0.5v12M8.5 0.5v12" fill="none" stroke="#fff"/></svg>
<svg style="left:1358px;top:842px;" width="14" height="13" viewBox="0 0 14 13"><rect x="0.5" y="0.5" width="13" height="12" fill="none" stroke="#fff"/><rect x="3.5" y="2.5" width="7" height="8" fill="none" stroke="#fff"/><path d="M5 4.5h4M5 6.5h4M5 8.5h4" stroke="#fff"/></svg>
<svg style="left:1396px;top:842px;" width="15" height="13" viewBox="0 0 15 13"><rect x="0.5" y="0.5" width="13" height="12" fill="none" stroke="#fff"/><rect x="0" y="0" width="5" height="8" fill="#eef4f0"/><rect x="6" y="0" width="3" height="8" fill="#eef4f0"/><path d="M9.5 0.5v8H13.5" fill="none" stroke="#fff"/></svg>
<div style="left:1427px;top:848px;width:6px;height:2px;background:#fff;"></div>
<div style="left:1437px;top:848px;width:100px;height:1px;background:#dfeee5;"></div>
<div style="left:1485px;top:843px;width:4px;height:11px;background:#fff;"></div>
<div style="left:1541px;top:848px;width:8px;height:2px;background:#fff;"></div>
<div style="left:1544px;top:845px;width:2px;height:8px;background:#fff;"></div>
<div class="t" style="left:1566.00px;top:841.84px;font-size:12px;line-height:12px;color:#fff;transform:scaleX(0.8341);transform-origin:0 0;">100%</div>
</body></html>
